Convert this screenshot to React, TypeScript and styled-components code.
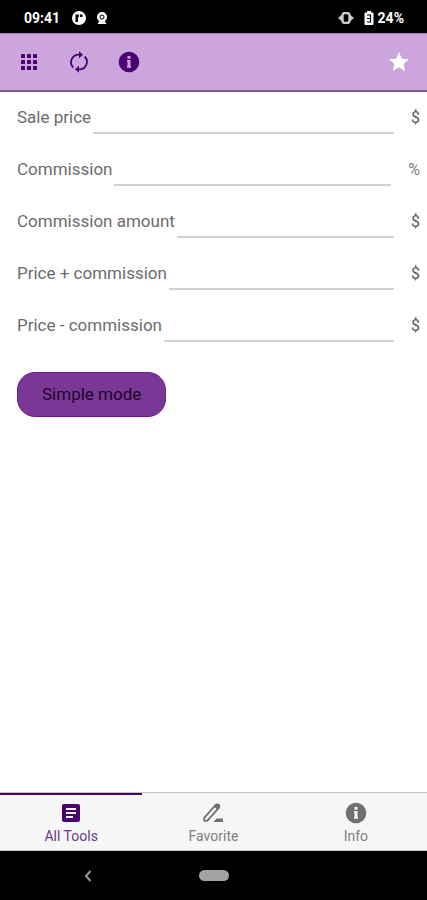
import React from "react";
import styled, { createGlobalStyle, css } from "styled-components";
import { MdArticle, MdStar } from "react-icons/md";

const GlobalStyle = createGlobalStyle`
  * { box-sizing: border-box; }
  html, body, #root { height: 100%; }
  body { margin: 0; background: #fff; font-family: Roboto, sans-serif; }
  button, input { font-family: inherit; }
`;

const Screen = styled.div`
  display: flex;
  flex-direction: column;
  min-height: 100%;
`;

const StatusBar = styled.header`
  display: flex;
  align-items: center;
  justify-content: space-between;
  height: 33px;
  padding: 2px 23px 0 24px;
  background: #000;
  color: #fff;
  font-size: 14px;
  font-weight: 700;
`;

const StatusGroup = styled.div`
  display: flex;
  align-items: center;
  gap: 10px;
`;

const Clock = styled.span`
  margin-right: 2px;
`;

const Battery = styled.span`
  display: flex;
  align-items: center;
  gap: 4px;
`;

const Toolbar = styled.nav`
  display: flex;
  align-items: center;
  gap: 26px;
  height: 59px;
  padding: 0 16px 1px 17px;
  background: #cca5dd;
  border-top: 1px solid #a184b0;
  border-bottom: 2px solid #7d5a90;
`;

const IconButton = styled.button<{ $light?: boolean }>`
  display: flex;
  padding: 0;
  border: 0;
  background: none;
  color: ${({ $light }) => ($light ? "#fff" : "#4a0072")};
  font-size: 24px;
  margin-left: ${({ $light }) => ($light ? "auto" : "0")};
`;

const Form = styled.form`
  flex: 1;
  display: flex;
  flex-direction: column;
  align-items: stretch;
  padding: 0 7px 0 17px;
`;

const Field = styled.div`
  display: flex;
  gap: 2px;
  height: 52px;
  padding-top: 10px;
`;

const Label = styled.label`
  color: #6c6c6c;
  font-size: 17px;
  line-height: 30px;
`;

const Entry = styled.input`
  flex: 1;
  min-width: 0;
  height: 32px;
  padding: 0;
  border: 0;
  border-bottom: 2px solid #d2d2d2;
  background: transparent;
  color: #333;
  font-size: 17px;
  outline: 0;
`;

const Unit = styled.span<{ $soft?: boolean }>`
  padding-left: 15px;
  color: ${({ $soft }) => ($soft ? "#808080" : "#5a5a5a")};
  font-size: 16px;
  line-height: 32px;
`;

const ModeButton = styled.button`
  align-self: flex-start;
  height: 45px;
  margin-top: 20px;
  padding: 0 24px 2px;
  border: 1px solid #6d1b8c;
  border-radius: 18px;
  background: #7b3796;
  color: #1c0428;
  font-size: 17px;
`;

const Tabs = styled.nav`
  display: flex;
  height: 59px;
  background: #f6f6f6;
  border-top: 1px solid #c4c4c4;
  border-bottom: 1px solid #c8c8c8;
`;

const Tab = styled.a<{ $active?: boolean }>`
  flex: 1;
  display: flex;
  flex-direction: column;
  align-items: center;
  padding-top: 6px;
  border-top: 2px solid transparent;
  color: #707070;
  font-size: 14px;
  line-height: 22px;
  text-decoration: none;
  ${({ $active }) =>
    $active &&
    css`
      color: #4a0072;
      border-top-color: #4a0072;
    `}
  svg {
    font-size: 24px;
  }
`;

const TabText = styled.span<{ $active?: boolean }>`
  color: ${({ $active }) => ($active ? "#6a3a88" : "#808080")};
`;

const SystemBar = styled.footer`
  display: grid;
  grid-template-columns: 1fr 30px 1fr;
  align-items: center;
  height: 49px;
  background: #000;
`;

const BackButton = styled.button`
  display: flex;
  justify-self: center;
  padding: 0 22px 0 0;
  border: 0;
  background: none;
`;

const HomeButton = styled.button`
  height: 11px;
  padding: 0;
  border: 0;
  border-radius: 6px;
  background: #a3a3a3;
`;

const GridIcon = () => (
  <svg width="24" height="24" viewBox="0 0 24 24" fill="currentColor" aria-hidden="true">
    {[4, 10, 16].map((y) =>
      [4, 10, 16].map((x) => (
        <rect key={`${x}-${y}`} x={x} y={y} width="4" height="4" rx="0.600" />
      ))
    )}
  </svg>
);

const RefreshIcon = () => (
  <svg width="24" height="24" viewBox="0 0 24 24" aria-hidden="true">
    <g fill="none" stroke="currentColor" strokeWidth="1.800">
      <path d="M6.300 17.500A7.600 7.600 0 0 1 12.500 4.600" />
      <path d="M17.700 6.500A7.600 7.600 0 0 1 11.500 19.400" />
    </g>
    <path d="M12 1.200L16 4.700 12 8.200zM12 15.800L8 19.300 12 22.800z" fill="currentColor" />
  </svg>
);

const InfoIcon = ({ mark }: { mark: string }) => (
  <svg width="24" height="24" viewBox="0 0 24 24" aria-hidden="true">
    <circle cx="12" cy="12" r="10.300" fill="currentColor" />
    <path d="M10.500 6h3v2.800h-3zM10 10h3.500v6h.5v1.800h-4V16h.5v-4.200H10z" fill={mark} />
  </svg>
);

const PenIcon = () => (
  <svg width="24" height="24" viewBox="0 0 24 24" aria-hidden="true">
    <path
      d="M3.200 19.800v-3L14.500 4.200q1.500-1.500 3 0t0 3L6.200 19.800z"
      fill="none"
      stroke="currentColor"
      strokeWidth="1.800"
      strokeLinejoin="round"
    />
    <path d="M13 5.500l2-2q2-1.500 3.500 0t0 3.500l-2 2zM15.500 17.500h6.500v3.500h-9.500z" fill="currentColor" />
  </svg>
);

const fields = [
  { id: "sale-price", label: "Sale price", unit: "$" },
  { id: "commission", label: "Commission", unit: "%" },
  { id: "commission-amount", label: "Commission amount", unit: "$" },
  { id: "price-plus", label: "Price + commission", unit: "$" },
  { id: "price-minus", label: "Price - commission", unit: "$" },
];

export default function App() {
  return (
    <>
      <GlobalStyle />
      <Screen>
        <StatusBar>
          <StatusGroup>
            <Clock>09:41</Clock>
            <svg width="14" height="14" viewBox="0 0 14 14" aria-hidden="true">
              <circle cx="7" cy="7" r="7" fill="#fff" />
              <path d="M3.500 3.500H7V6H6v5H3.500zM8 3.500h2.500V6H8z" fill="#000" />
            </svg>
            <svg width="12" height="14" viewBox="0 0 12 14" aria-hidden="true">
              <circle cx="6" cy="6" r="5" fill="#fff" />
              <circle cx="6" cy="6" r="2" fill="none" stroke="#000" />
              <path d="M1.500 13l2-3h5l2 3z" fill="#fff" />
            </svg>
          </StatusGroup>
          <StatusGroup>
            <svg width="16" height="12" viewBox="0 0 16 12" aria-hidden="true">
              <path d="M0 6l4-3.500v7zM16 6l-4-3.500v7z" fill="#ccc" />
              <rect x="4.500" y="1" width="7" height="10" rx="2.500" fill="none" stroke="#ccc" strokeWidth="2.400" />
            </svg>
            <Battery>
              <svg width="10" height="14" viewBox="0 0 10 14" aria-hidden="true">
                <path d="M3 0h4v1.500h1.500q1 0 1 1V13q0 1-1 1h-7q-1 0-1-1V2.500q0-1 1-1H3z" fill="#fff" />
                <path d="M3 4h3.500v3.500H3M6.500 7v4H3" fill="none" stroke="#000" strokeWidth="1.200" />
              </svg>
              24%
            </Battery>
          </StatusGroup>
        </StatusBar>
        <Toolbar aria-label="Tools">
          <IconButton aria-label="All tools"><GridIcon /></IconButton>
          <IconButton aria-label="Reset"><RefreshIcon /></IconButton>
          <IconButton aria-label="Information"><InfoIcon mark="#cca5dd" /></IconButton>
          <IconButton $light aria-label="Add to favorites"><MdStar /></IconButton>
        </Toolbar>
        <Form onSubmit={(e) => e.preventDefault()}>
          {fields.map(({ id, label, unit }) => (
            <Field key={id}>
              <Label htmlFor={id}>{label}</Label>
              <Entry id={id} inputMode="decimal" />
              <Unit $soft={unit === "%"}>{unit}</Unit>
            </Field>
          ))}
          <ModeButton type="button">Simple mode</ModeButton>
        </Form>
        <Tabs aria-label="Sections">
          <Tab href="#tools" $active aria-current="page">
            <MdArticle />
            <TabText $active>All Tools</TabText>
          </Tab>
          <Tab href="#favorite">
            <PenIcon />
            <TabText>Favorite</TabText>
          </Tab>
          <Tab href="#info">
            <InfoIcon mark="#f6f6f6" />
            <TabText>Info</TabText>
          </Tab>
        </Tabs>
        <SystemBar>
          <BackButton aria-label="Back">
            <svg width="8" height="12" viewBox="0 0 8 12" aria-hidden="true">
              <path d="M6.500 1L2 6l4.500 5" fill="none" stroke="#999" strokeWidth="2" />
            </svg>
          </BackButton>
          <HomeButton aria-label="Home" />
        </SystemBar>
      </Screen>
    </>
  );
}
